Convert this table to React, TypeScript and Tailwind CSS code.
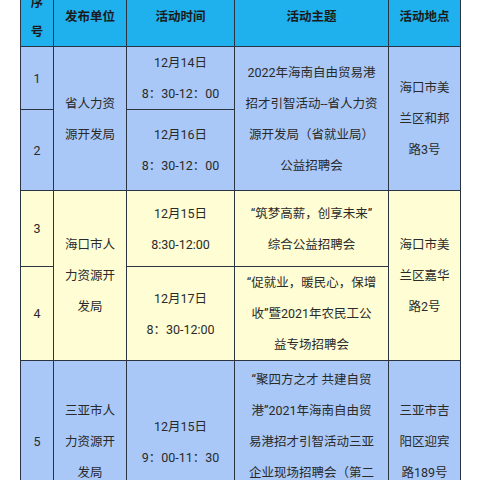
import * as React from "react";

type Cell = {
  lines: string[];
  rowSpan?: number;
};

const rows: { h: string; bg: string; cells: Cell[] }[] = [
  {
    h: "h-[62px]",
    bg: "bg-[#a9c8f8]",
    cells: [
      { lines: ["1"] },
      { lines: ["省人力资", "源开发局"], rowSpan: 2 },
      { lines: ["12月14日", "8：30-12：00"] },
      {
        lines: ["2022年海南自由贸易港", "招才引智活动--省人力资", "源开发局（省就业局）", "公益招聘会"],
        rowSpan: 2,
      },
      { lines: ["海口市美", "兰区和邦", "路3号"], rowSpan: 2 },
    ],
  },
  {
    h: "h-[81px]",
    bg: "bg-[#a9c8f8]",
    cells: [{ lines: ["2"] }, { lines: ["12月16日", "8：30-12：00"] }],
  },
  {
    h: "h-[76px]",
    bg: "bg-[#fffdd3]",
    cells: [
      { lines: ["3"] },
      { lines: ["海口市人", "力资源开", "发局"], rowSpan: 2 },
      { lines: ["12月15日", "8:30-12:00"] },
      { lines: ["“筑梦高薪，创享未来”", "综合公益招聘会"] },
      { lines: ["海口市美", "兰区嘉华", "路2号"], rowSpan: 2 },
    ],
  },
  {
    h: "h-[92px]",
    bg: "bg-[#fffdd3]",
    cells: [
      { lines: ["4"] },
      { lines: ["12月17日", "8：30-12:00"] },
      { lines: ["“促就业，暖民心，保增", "收”暨2021年农民工公", "益专场招聘会"] },
    ],
  },
  {
    h: "h-[162px]",
    bg: "bg-[#a9c8f8]",
    cells: [
      { lines: ["5"] },
      { lines: ["三亚市人", "力资源开", "发局"] },
      { lines: ["12月15日", "9：00-11：30"] },
      {
        lines: ["“聚四方之才 共建自贸", "港”2021年海南自由贸", "易港招才引智活动三亚", "企业现场招聘会（第二", "期）"],
      },
      { lines: ["三亚市吉", "阳区迎宾", "路189号"] },
    ],
  },
];

const headers = [["序", "号"], ["发布单位"], ["活动时间"], ["活动主题"], ["活动地点"]];

function Lines({ lines }: { lines: string[] }) {
  return (
    <>
      {lines.map((l, i) => (
        <span key={i} className="block whitespace-nowrap">
          {l}
        </span>
      ))}
    </>
  );
}

export default function App() {
  return (
    <div className="h-[480px] w-[480px] overflow-hidden bg-white">
      <table
        className="mx-[20px] mt-[-14px] w-[440px] table-fixed border-collapse text-center text-[12.5px] leading-[31px] text-[#2a2a2a]"
        style={{ fontFamily: '"Roboto", "Noto Sans CJK SC", sans-serif' }}
      >
        <colgroup>
          <col className="w-[33px]" />
          <col className="w-[73px]" />
          <col className="w-[108px]" />
          <col className="w-[154px]" />
          <col className="w-[72px]" />
        </colgroup>
        <thead>
          <tr className="h-[60px] bg-[#1fb1ee]">
            {headers.map((h, i) => (
              <th
                key={i}
                className={
                  "border-[1.5px] border-[#2b3442] p-0 font-bold text-[#1b1b1b] " +
                  (i === 0 ? "leading-[29px]" : "")
                }
              >
                <Lines lines={h} />
              </th>
            ))}
          </tr>
        </thead>
        <tbody>
          {rows.map((r, ri) => (
            <tr key={ri} className={r.h + " " + r.bg}>
              {r.cells.map((c, ci) => (
                <td
                  key={ci}
                  rowSpan={c.rowSpan}
                  className="border-[1.5px] border-[#2b3442] p-0 align-middle"
                >
                  <Lines lines={c.lines} />
                </td>
              ))}
            </tr>
          ))}
        </tbody>
      </table>
    </div>
  );
}
